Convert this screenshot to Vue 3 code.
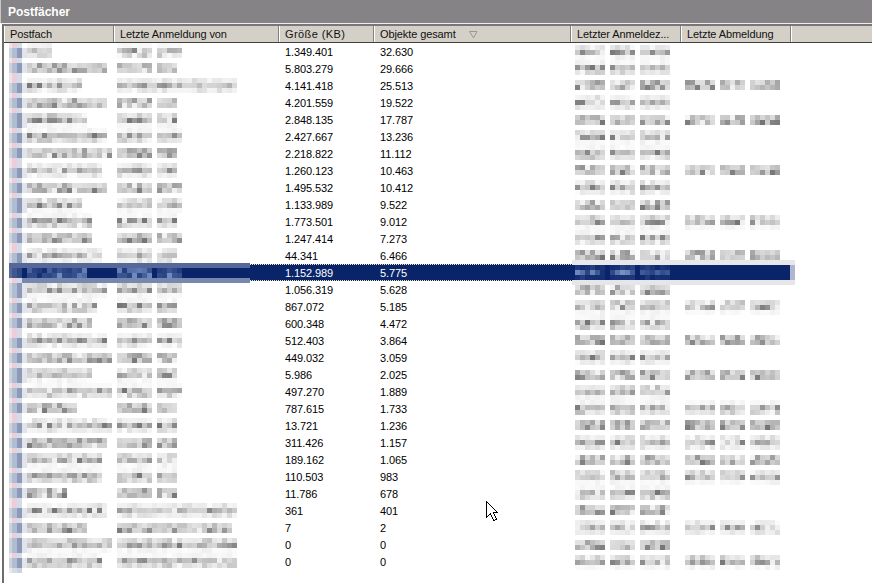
<script setup>
const data = [
  ['1.349.401', '32.630', 52, 182, 0],
  ['5.803.279', '29.666', 107, 177, 0],
  ['4.141.418', '25.513', 82, 237, 1],
  ['4.201.559', '19.522', 107, 177, 0],
  ['2.848.135', '17.787', 87, 177, 1],
  ['2.427.667', '13.236', 107, 182, 0],
  ['2.218.822', '11.112', 112, 177, 0],
  ['1.260.123', '10.463', 102, 177, 1],
  ['1.495.532', '10.412', 107, 182, 0],
  ['1.133.989', '9.522', 82, 182, 0],
  ['1.773.501', '9.012', 92, 177, 1],
  ['1.247.414', '7.273', 92, 182, 0],
  ['44.341', '6.466', 102, 177, 1],
  ['1.152.989', '5.775', 87, 182, 0],
  ['1.056.319', '5.628', 107, 182, 0],
  ['867.072', '5.185', 97, 177, 1],
  ['600.348', '4.472', 92, 182, 0],
  ['512.403', '3.864', 107, 182, 1],
  ['449.032', '3.059', 112, 177, 0],
  ['5.986', '2.025', 92, 177, 1],
  ['497.270', '1.889', 112, 182, 0],
  ['787.615', '1.733', 77, 177, 1],
  ['13.721', '1.236', 112, 177, 1],
  ['311.426', '1.157', 107, 177, 1],
  ['189.162', '1.065', 102, 177, 1],
  ['110.503', '983', 102, 177, 1],
  ['11.786', '678', 67, 177, 0],
  ['361', '401', 107, 237, 0],
  ['7', '2', 87, 232, 1],
  ['0', '0', 112, 237, 0],
  ['0', '0', 102, 237, 1]
]
const rows = data.map(([size, count], i) => ({ size, count, selected: i === 13 }))

let seed = 20240611
function rnd() {
  seed = (seed * 1664525 + 1013904223) >>> 0
  return ((seed >>> 8) & 0xffff) / 65536
}
const hex = v => Math.max(0, Math.min(255, Math.round(v))).toString(16).padStart(2, '0')
const gray = v => '#' + hex(v) + hex(v) + hex(v)
const rects = []
const add = (x, y, w, h, fill) => rects.push({ x, y, w, h, fill })

function overlap(c, g) {
  const top = Math.max(c - 5.5, g)
  const bottom = Math.min(c + 5.5, g + 5)
  return Math.max(0, bottom - top) / 5
}
function cell(x, y, f, selected) {
  const r = rnd()
  const depth = r < 0.05 ? 14 : 30 + 46 * r + 50 * r * r * r * r
  if (selected) {
    const t = f * depth / 100
    add(x, y, 5, 5, '#' + hex(10 + 85 * t) + hex(36 + 85 * t) + hex(106 + 70 * t))
  } else {
    add(x, y, 5, 5, gray(255 - f * depth))
  }
}
function block(x0, x1, c, phase, selected, gaps = []) {
  for (let g = phase + 5 * Math.floor((c - 10 - phase) / 5); g < c + 8; g += 5) {
    const raw = overlap(c, g)
    if (raw < 0.3) continue
    if (selected && phase === 3 && (g < c - 5 || g > c + 1)) continue
    const strong = Math.abs(g + 2.5 - (c + 1)) <= 2.5
    const f = raw * raw * (strong ? 1.1 : 0.85)
    for (let x = x0; x < x1; x += 5) {
      if (gaps.includes(x)) continue
      cell(x, g, f, selected)
    }
  }
}

/* selected row: the blurred halo left and right of the sharp part */
add(9, 263, 241, 5, '#56689a')
add(9, 268, 241, 10, '#0a246a')
add(9, 278, 241, 5, '#7787ae')
add(572, 260, 223, 5, '#e8e8ec')
add(572, 265, 218, 15, '#0a246a')
add(790, 265, 5, 15, '#b0b6d0')
add(572, 280, 223, 5, '#e6e6ea')

data.forEach((d, i) => {
  const c = 51.5 + 17 * i
  const sel = i === 13
  /* icon column */
  for (let g = 3 + 5 * Math.floor((c - 11) / 5); g < c + 7; g += 5) {
    const local = g + 2.5 - c
    const top = local < -4.5
    const low = local > 6
    if (sel) {
      if (g < 268 || g >= 278) continue
      add(9, g, 3, 5, '#5a6c9c')
      add(12, g, 5, 5, '#40588f')
      add(17, g, 5, 5, '#2f4a86')
      continue
    }
    const a = top ? '#ece4ea' : low ? '#e6e9ef' : '#ccd3df'
    const b = top ? '#eccfd6' : low ? '#d6dce6' : '#b0bccf'
    const e = top ? '#d5dce8' : low ? '#c8d2e0' : '#8b9ab8'
    add(9, g, 3, 5, a)
    add(12, g, 5, 5, b)
    add(17, g, 5, 5, e)
    if (!top && !low) add(22, g, 5, 5, '#e2e4ea')
  }
  block(27, d[2], c, 3, sel)
  block(117, d[3], c, 3, sel, d[3] < 200 ? [152] : [])
  /* date columns use their own 5px grid */
  const date = x => [[x, x + 30], [x + 35, x + 60], [x + 65, x + 95]]
    .forEach(([a, b]) => block(a, b, c, 0, sel))
  date(575)
  if (d[4]) date(685)
})
</script>

<template>
  <div class="page">
    <div class="title">Postfächer</div>
    <div class="rule"></div>
    <div class="frame">
      <div class="head">
        <div class="hcell">Postfach</div>
        <div class="hcell">Letzte Anmeldung von</div>
        <div class="hcell wide">Größe (KB)</div>
        <div class="hcell">
          Objekte gesamt
          <svg class="sort" width="9" height="8" viewBox="0 0 9 8">
            <path d="M0.5 0.5H8L4.5 7Z" fill="none" stroke="#9a9890" />
          </svg>
        </div>
        <div class="hcell">Letzter Anmeldez...</div>
        <div class="hcell">Letzte Abmeldung</div>
        <div class="hcell filler"></div>
      </div>
      <div class="body">
        <div v-for="(r, i) in rows" :key="i" class="row" :class="{ selected: r.selected }">
          <div></div>
          <div></div>
          <div class="num">{{ r.size }}</div>
          <div class="num">{{ r.count }}</div>
        </div>
      </div>
    </div>
    <svg class="mosaic" width="872" height="583" shape-rendering="crispEdges">
      <rect v-for="(m, i) in rects" :key="i" :x="m.x" :y="m.y" :width="m.w" :height="m.h" :fill="m.fill" />
    </svg>
    <svg class="cursor" width="13" height="22" viewBox="0 0 13 22" shape-rendering="crispEdges">
      <path d="M0.5 0.5V16.5L4.5 12.5L7.5 19.5L10.5 18.5L7.5 11.5H11.5Z" fill="#fff" stroke="#000" />
    </svg>
  </div>
</template>

<style scoped>
.page {
  position: relative;
  width: 872px;
  height: 583px;
  overflow: hidden;
  background: #fff;
  font-family: "Liberation Sans", Arial, sans-serif;
  font-size: 11px;
  color: #000;
}
.title {
  height: 23px;
  box-sizing: border-box;
  padding: 5px 0 0 7px;
  background: #858385;
  border-left: 1px solid #c8c6c0;
  color: #fff;
  font-weight: bold;
  font-size: 12px;
  line-height: 15px;
  letter-spacing: 0;
}
.rule {
  height: 1px;
  background: #f0efec;
}
.frame {
  margin-left: 2px;
  height: 559px;
  border-left: 2px solid #6e6d6d;
  border-top: 2px solid #77767a;
}
.head {
  display: grid;
  grid-template-columns: 110px 165px 95px 197px 110px 110px 1fr;
  height: 16px;
  border-bottom: 1px solid #404040;
  background: #d4d0c8;
}
.hcell {
  display: flex;
  align-items: center;
  box-sizing: border-box;
  padding: 1px 0 0 5px;
  border-left: 1px solid #fff;
  border-right: 1px solid #808080;
  white-space: nowrap;
  line-height: 15px;
  color: #111;
  letter-spacing: -0.1px;
}
.wide {
  letter-spacing: 0.4px;
}
.filler {
  border-right: 0;
}
.sort {
  margin-left: 13px;
}
.row {
  display: grid;
  grid-template-columns: 105px 165px 95px 197px;
  width: 782px;
  margin-left: 5px;
  height: 17px;
  box-sizing: border-box;
  line-height: 18px;
}
.num {
  padding-left: 6px;
  letter-spacing: -0.1px;
}
.selected {
  background: #0a246a;
  color: #fff;
  border-top: 1px dotted #f2e6a8;
  border-bottom: 1px dotted #f2e6a8;
  line-height: 16px;
}
.mosaic {
  position: absolute;
  left: 0;
  top: 0;
  pointer-events: none;
}
.cursor {
  position: absolute;
  left: 486px;
  top: 501px;
}
</style>
